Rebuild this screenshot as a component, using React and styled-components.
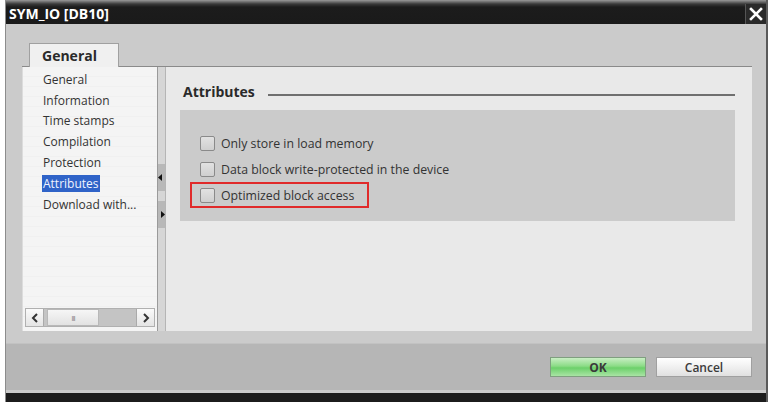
import React from "react";
import styled, { createGlobalStyle } from "styled-components";

const Global = createGlobalStyle`
  html, body { margin: 0; padding: 0; background: #ffffff; }
  body { font-family: "Open Sans", "DejaVu Sans", sans-serif; }
`;

const Window = styled.div`
  margin-left: 5px;
  width: 763px;
  height: 402px;
  display: flex;
  flex-direction: column;
  border-left: 1px solid #8c8c8c;
  border-right: 2px solid #5a5a5a;
  box-sizing: border-box;
`;

const TitleBar = styled.div`
  height: 24px;
  flex: none;
  display: flex;
  align-items: center;
  justify-content: space-between;
  background: linear-gradient(#9a9a9a 0px, #3a3a3a 4px, #1c1c1c 7px, #1a1a1a 100%);
  padding: 0 0 0 3px;
  box-sizing: border-box;
`;

const Title = styled.span`
  color: #fff;
  font-family: "Open Sans", "DejaVu Sans", sans-serif;
  font-weight: 700;
  font-size: 14px;
  padding-top: 3px;
  letter-spacing: 0px;
`;

const CloseBtn = styled.div`
  width: 20px;
  height: 20px;
  margin-top: 3px;
  display: flex;
  align-items: center;
  justify-content: center;
  background: #2a2a2a;
  border-left: 1px solid #555;
`;

const Body = styled.div`
  flex: 1;
  background: #cbcbcb;
  display: flex;
  flex-direction: column;
`;

const Content = styled.div`
  padding: 19px 14px 0 16px;
  display: flex;
  flex-direction: column;
`;

const TabStrip = styled.div`
  display: flex;
  padding-left: 7px;
`;

const Tab = styled.div`
  width: 90px;
  height: 24px;
  box-sizing: border-box;
  background: #f0f0f0;
  border: 1px solid #a0a0a0;
  border-bottom: none;
  font-weight: 700;
  font-size: 14px;
  color: #2a2a2a;
  padding: 2px 0 0 12px;
  margin-bottom: -1px;
  position: relative;
  z-index: 1;
`;

const Panel = styled.div`
  height: 264px;
  display: flex;
  border-top: 1px solid #8a8a8a;
`;

const ListPane = styled.div`
  width: 135px;
  display: flex;
  flex-direction: column;
  background: repeating-linear-gradient(#f4f4f4 0px, #f4f4f4 9px, #ececec 10px);
  border-left: 1px solid #dcdcdc;
  padding-top: 2px;
  box-sizing: border-box;
`;

const ListItems = styled.div`
  flex: 1;
  display: flex;
  flex-direction: column;
  padding-left: 19px;
`;

const Item = styled.div`
  height: 20.8px;
  display: flex;
  align-items: center;
  font-size: 12px;
  color: #333;
  span {
    padding: 0 1px;
    background: ${(p) => (p.$active ? "#2f63c8" : "transparent")};
    color: ${(p) => (p.$active ? "#f0f4ff" : "#333")};
  }
`;

const HScroll = styled.div`
  height: 19px;
  margin: 0 2px 4px 2px;
  display: flex;
  background: #c4c4c4;
  border: 1px solid #b0b0b0;
  box-sizing: border-box;
`;

const ArrowBtn = styled.div`
  width: 17px;
  display: flex;
  align-items: center;
  justify-content: center;
  background: linear-gradient(#fafafa, #e4e4e4);
  border-right: ${(p) => (p.$left ? "1px solid #aaa" : "none")};
  border-left: ${(p) => (p.$left ? "none" : "1px solid #aaa")};
  margin-right: ${(p) => (p.$left ? "3px" : "0")};
  margin-left: ${(p) => (p.$left ? "0" : "auto")};
`;

const Thumb = styled.div`
  width: 52px;
  background: linear-gradient(#f6f6f6, #e2e2e2);
  border: 1px solid #b8b8b8;
  box-sizing: border-box;
  display: flex;
  align-items: center;
  justify-content: center;
  font-size: 8px;
  color: #888;
  letter-spacing: -1px;
`;

const Splitter = styled.div`
  width: 9px;
  background: #d6d6d6;
  border-left: 1px solid #9a9a9a;
  border-right: 1px solid #b5b5b5;
  box-sizing: border-box;
  display: flex;
  flex-direction: column;
  padding-top: 97px;
`;

const Grip = styled.div`
  height: 27px;
  margin-bottom: 10px;
  background: #b8b8b8;
  display: flex;
  align-items: center;
  justify-content: ${(p) => (p.$dir === "left" ? "flex-start" : "flex-end")};
`;

const RightPane = styled.div`
  flex: 1;
  background: #e9e9e9;
  padding: 13px 17px 0 17px;
  display: flex;
  flex-direction: column;
`;

const SectionHead = styled.div`
  display: flex;
  align-items: center;
  gap: 13px;
  height: 22px;
`;

const HeadText = styled.span`
  font-weight: 700;
  font-size: 14px;
  color: #2a2a2a;
`;

const HeadLine = styled.div`
  flex: 1;
  height: 2px;
  background: #6f6f6f;
  margin-top: 8px;
`;

const Group = styled.div`
  margin: 8px 0 0 -3px;
  height: 111px;
  background: #cbcbcb;
  display: flex;
  flex-direction: column;
  padding: 20px 0 0 10px;
  box-sizing: border-box;
`;

const Row = styled.div`
  display: flex;
  align-items: center;
  gap: 6px;
  height: 26px;
  box-sizing: border-box;
  width: ${(p) => (p.$marked ? "179px" : "auto")};
  border: 2px solid ${(p) => (p.$marked ? "#e02a2a" : "transparent")};
  padding-left: 8px;
  font-size: 12.3px;
  color: #333;
`;

const Box = styled.div`
  width: 13px;
  height: 13px;
  border: 1px solid #8a8a8a;
  border-radius: 2px;
  background: linear-gradient(#e2e2e2, #cfcfcf);
`;

const Footer = styled.div`
  margin-top: 12px;
  height: 47px;
  background: #b6b6b6;
  border-top: 1px solid #c2c2c2;
  display: flex;
  justify-content: flex-end;
  align-items: flex-start;
  gap: 10px;
  padding: 13px 14px 0 0;
  box-sizing: border-box;
`;

const Button = styled.div`
  width: 96px;
  height: 20px;
  box-sizing: border-box;
  display: flex;
  align-items: center;
  justify-content: center;
  font-size: 12px;
  font-weight: ${(p) => (p.$primary ? 700 : 600)};
  color: #3a3a3a;
  border: 1px solid ${(p) => (p.$primary ? "#7f9f7f" : "#a0a0a0")};
  background: ${(p) =>
    p.$primary
      ? "linear-gradient(#c9eec4 0%, #8bdc86 45%, #6cd06a 55%, #a9e4a4 100%)"
      : "linear-gradient(#ffffff 0%, #f0f0f0 50%, #e0e0e0 100%)"};
`;

const BottomBar = styled.div`
  height: 9px;
  background: #1c1c1c;
  flex: none;
`;

const items = [
  "General",
  "Information",
  "Time stamps",
  "Compilation",
  "Protection",
  "Attributes",
  "Download with...",
];

export default function App() {
  return (
    <>
      <Global />
      <Window>
        <TitleBar>
          <Title>SYM_IO [DB10]</Title>
          <CloseBtn>
            <svg width="14" height="14" viewBox="0 0 14 14">
              <path d="M2 2 L12 12 M12 2 L2 12" stroke="#fff" strokeWidth="2.6" strokeLinecap="square" />
            </svg>
          </CloseBtn>
        </TitleBar>
        <Body>
          <Content>
            <TabStrip>
              <Tab>General</Tab>
            </TabStrip>
            <Panel>
              <ListPane>
                <ListItems>
                  {items.map((t) => (
                    <Item key={t} $active={t === "Attributes"}>
                      <span>{t}</span>
                    </Item>
                  ))}
                </ListItems>
                <HScroll>
                  <ArrowBtn $left>
                    <svg width="8" height="10" viewBox="0 0 8 10">
                      <path d="M6 1 L2 5 L6 9" stroke="#333" strokeWidth="2" fill="none" />
                    </svg>
                  </ArrowBtn>
                  <Thumb>III</Thumb>
                  <ArrowBtn>
                    <svg width="8" height="10" viewBox="0 0 8 10">
                      <path d="M2 1 L6 5 L2 9" stroke="#333" strokeWidth="2" fill="none" />
                    </svg>
                  </ArrowBtn>
                </HScroll>
              </ListPane>
              <Splitter>
                <Grip $dir="left">
                  <svg width="4" height="7" viewBox="0 0 4 7">
                    <path d="M4 0 L0 3.5 L4 7 Z" fill="#111" />
                  </svg>
                </Grip>
                <Grip $dir="right">
                  <svg width="4" height="7" viewBox="0 0 4 7">
                    <path d="M0 0 L4 3.5 L0 7 Z" fill="#111" />
                  </svg>
                </Grip>
              </Splitter>
              <RightPane>
                <SectionHead>
                  <HeadText>Attributes</HeadText>
                  <HeadLine />
                </SectionHead>
                <Group>
                  <Row>
                    <Box />
                    Only store in load memory
                  </Row>
                  <Row>
                    <Box />
                    Data block write-protected in the device
                  </Row>
                  <Row $marked>
                    <Box />
                    Optimized block access
                  </Row>
                </Group>
              </RightPane>
            </Panel>
          </Content>
          <Footer>
            <Button $primary>OK</Button>
            <Button>Cancel</Button>
          </Footer>
        </Body>
        <BottomBar />
      </Window>
    </>
  );
}
